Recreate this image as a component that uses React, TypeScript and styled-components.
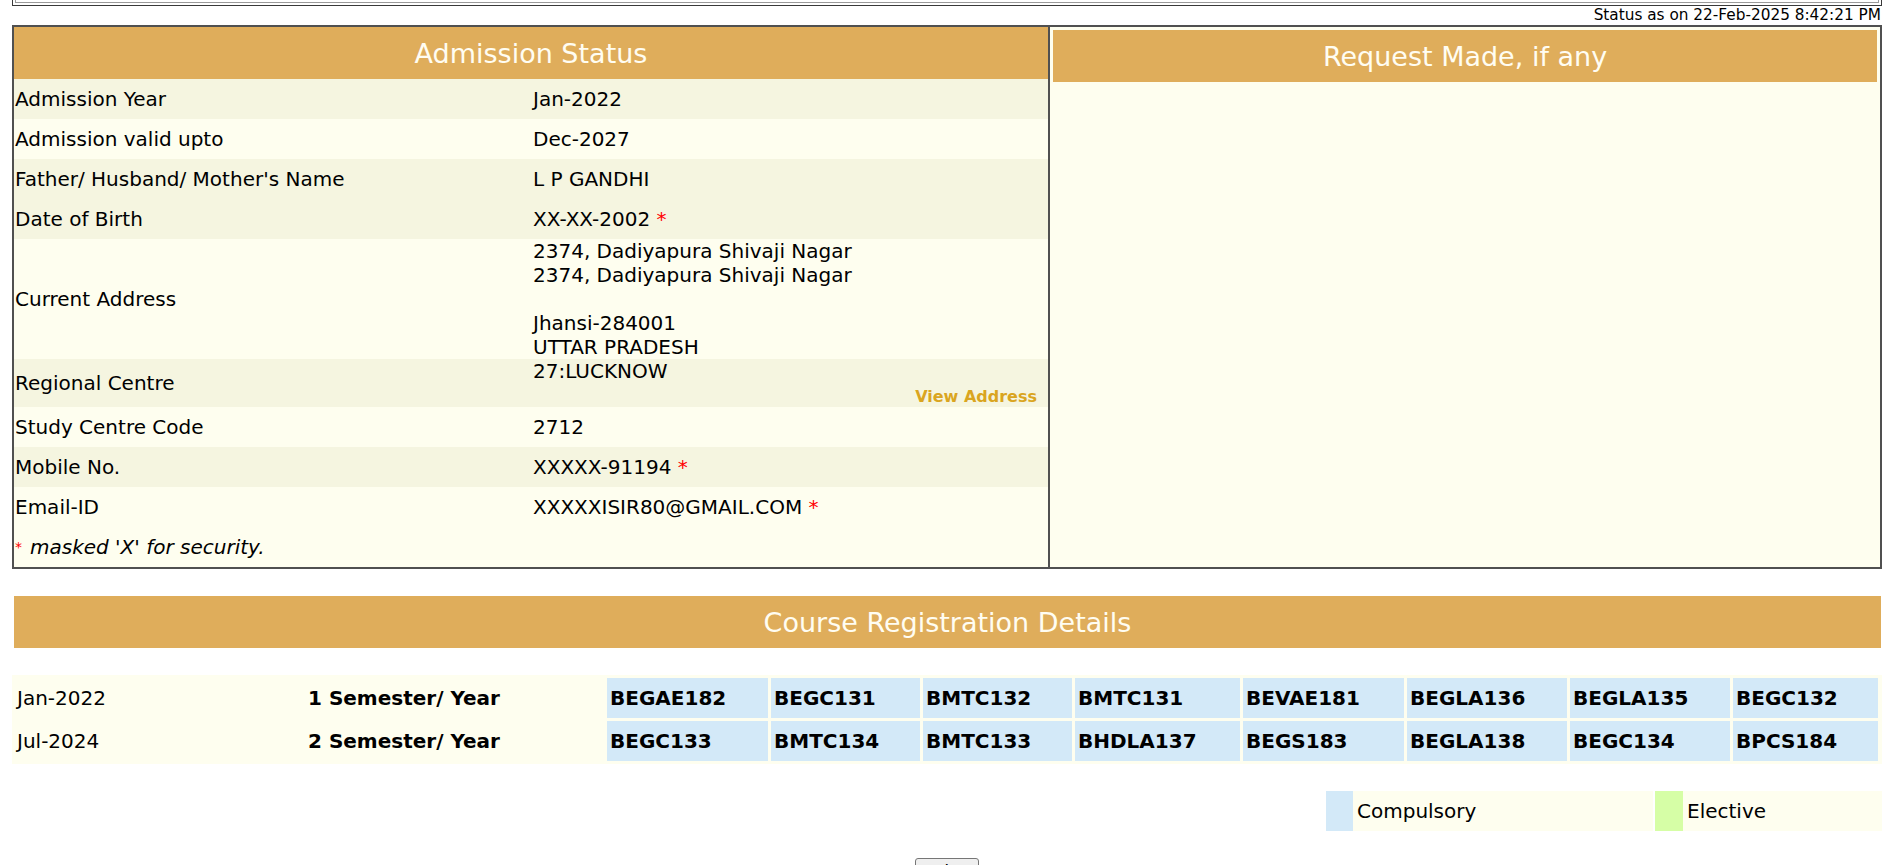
import React from "react";
import styled, { createGlobalStyle } from "styled-components";

const GlobalStyle = createGlobalStyle`
  html, body { margin: 0; padding: 0; background: #ffffff; }
  body { font-family: "DejaVu Sans", Verdana, sans-serif; color: #000; }
`;

const ORANGE = "#DFAD5B";
const BEIGE = "#F5F5E0";
const IVORY = "#FEFEEF";
const BLUE = "#D3E9F8";
const GREEN = "#D6FEA6";

const Page = styled.div`
  padding: 0 9px 0 12px;
`;

const TopFrame = styled.div`
  height: 6px;
  box-sizing: border-box;
  border: 1px solid #3a3a3a;
  border-top: none;
  padding: 0 2px 2px 2px;
`;

const TopFrameInner = styled.div`
  height: 3px;
  box-sizing: border-box;
  border: 1px solid #9a9a9a;
  border-top: none;
`;

const StatusLine = styled.div`
  height: 19px;
  line-height: 19px;
  font-size: 15.3px;
  text-align: right;
  padding-right: 1px;
  white-space: nowrap;
`;

const Panels = styled.div`
  display: grid;
  grid-template-columns: 1036px 1fr;
  border: 2px solid #505050;
`;

const LeftPanel = styled.div`
  border-right: 2px solid #505050;
  display: flex;
  flex-direction: column;
`;

const RightPanel = styled.div`
  background: ${IVORY};
  padding: 3px;
`;

const PanelHeader = styled.div`
  height: 52px;
  background: ${ORANGE};
  color: #fffdf2;
  font-size: 27px;
  display: flex;
  align-items: center;
  justify-content: center;
`;

const InfoRow = styled.div<{ $shade: "dark" | "light" }>`
  display: grid;
  grid-template-columns: 518px 1fr;
  min-height: 40px;
  background: ${(p) => (p.$shade === "dark" ? BEIGE : IVORY)};
  font-size: 20px;
  line-height: 24px;
`;

const Label = styled.div`
  display: flex;
  align-items: center;
  padding-left: 1px;
`;

const Value = styled.div<{ $top?: boolean }>`
  display: flex;
  flex-direction: column;
  justify-content: ${(p) => (p.$top ? "flex-start" : "center")};
  padding-left: 1px;
`;

const Star = styled.span`
  color: #ff0000;
`;

const ViewAddress = styled.div`
  align-self: flex-end;
  padding: 3px 11px 0 0;
  color: #DAA520;
  font-weight: bold;
  font-size: 16px;
  line-height: 21px;
`;

const Note = styled.div`
  display: flex;
  align-items: center;
  padding-left: 1px;
  font-size: 20px;
  font-style: italic;
  white-space: nowrap;
`;

const NoteStar = styled.span`
  color: #ff0000;
  font-size: 14px;
  font-style: normal;
  margin-right: 8px;
`;

const CourseHeader = styled(PanelHeader)`
  margin: 27px 1px 0 2px;
`;

const CourseGrid = styled.div`
  margin-top: 27px;
  background: ${IVORY};
  padding: 3px;
  display: grid;
  grid-template-columns: 288px 298px 161px 149px 149px 165px 161px 160px 160px 145px;
  grid-auto-rows: 40px;
  gap: 3px;
  font-size: 20px;
`;

const Cell = styled.div<{ $kind: "plain" | "bold" | "code" }>`
  display: flex;
  align-items: center;
  padding-left: ${(p) => (p.$kind === "code" ? "3px" : "2px")};
  font-weight: ${(p) => (p.$kind === "plain" ? "normal" : "bold")};
  background: ${(p) => (p.$kind === "code" ? BLUE : "transparent")};
  white-space: nowrap;
`;

const Legend = styled.div`
  margin-top: 27px;
  display: flex;
  justify-content: flex-end;
  height: 40px;
  font-size: 20px;
`;

const Swatch = styled.div<{ $color: string }>`
  width: ${(p) => (p.$color === BLUE ? 27 : 28)}px;
  background: ${(p) => p.$color};
`;

const LegendText = styled.div<{ $width: number; $gap?: boolean }>`
  width: ${(p) => p.$width}px;
  background: ${IVORY};
  display: flex;
  align-items: center;
  padding-left: 4px;
  box-sizing: border-box;
  margin-right: ${(p) => (p.$gap ? "2px" : "0")};
`;

const ButtonRow = styled.div`
  margin-top: 27px;
  display: flex;
  justify-content: center;
`;

const PrintButton = styled.button`
  font-family: "DejaVu Sans", Verdana, sans-serif;
  font-size: 18px;
  padding: 2px 10px;
  border: 1px solid #767676;
  border-radius: 3px;
  background: #efefef;
  color: #000;
`;

type Row = {
  label: string;
  value: string[];
  shade: "dark" | "light";
  star?: boolean;
};

const rows: Row[] = [
  { label: "Admission Year", value: ["Jan-2022"], shade: "dark" },
  { label: "Admission valid upto", value: ["Dec-2027"], shade: "light" },
  { label: "Father/ Husband/ Mother's Name", value: ["L P GANDHI"], shade: "dark" },
  { label: "Date of Birth", value: ["XX-XX-2002"], shade: "dark", star: true },
  {
    label: "Current Address",
    value: [
      "2374, Dadiyapura Shivaji Nagar",
      "2374, Dadiyapura Shivaji Nagar",
      "\u00a0",
      "Jhansi-284001",
      "UTTAR PRADESH",
    ],
    shade: "light",
  },
];

const rowsAfter: Row[] = [
  { label: "Study Centre Code", value: ["2712"], shade: "light" },
  { label: "Mobile No.", value: ["XXXXX-91194"], shade: "dark", star: true },
  { label: "Email-ID", value: ["XXXXXISIR80@GMAIL.COM"], shade: "light", star: true },
];

const courses = [
  {
    date: "Jan-2022",
    sem: "1 Semester/ Year",
    codes: ["BEGAE182", "BEGC131", "BMTC132", "BMTC131", "BEVAE181", "BEGLA136", "BEGLA135", "BEGC132"],
  },
  {
    date: "Jul-2024",
    sem: "2 Semester/ Year",
    codes: ["BEGC133", "BMTC134", "BMTC133", "BHDLA137", "BEGS183", "BEGLA138", "BEGC134", "BPCS184"],
  },
];

const renderRow = (r: Row) => (
  <InfoRow key={r.label} $shade={r.shade}>
    <Label>{r.label}</Label>
    <Value>
      {r.value.map((v, i) => (
        <div key={i}>
          {v}
          {r.star && i === r.value.length - 1 ? (
            <>
              {" "}
              <Star>*</Star>
            </>
          ) : null}
        </div>
      ))}
    </Value>
  </InfoRow>
);

export default function App() {
  return (
    <>
      <GlobalStyle />
      <Page>
        <TopFrame>
          <TopFrameInner />
        </TopFrame>
        <StatusLine>Status as on 22-Feb-2025 8:42:21 PM</StatusLine>
        <Panels>
          <LeftPanel>
            <PanelHeader>Admission Status</PanelHeader>
            {rows.map(renderRow)}
            <InfoRow $shade="dark">
              <Label>Regional Centre</Label>
              <Value $top>
                <div>27:LUCKNOW</div>
                <ViewAddress>View Address</ViewAddress>
              </Value>
            </InfoRow>
            {rowsAfter.map(renderRow)}
            <InfoRow $shade="light">
              <Note>
                <NoteStar>*</NoteStar>masked 'X' for security.
              </Note>
            </InfoRow>
          </LeftPanel>
          <RightPanel>
            <PanelHeader>Request Made, if any</PanelHeader>
          </RightPanel>
        </Panels>

        <CourseHeader>Course Registration Details</CourseHeader>
        <CourseGrid>
          {courses.map((c) => (
            <React.Fragment key={c.date}>
              <Cell $kind="plain">{c.date}</Cell>
              <Cell $kind="bold">{c.sem}</Cell>
              {c.codes.map((code) => (
                <Cell key={code} $kind="code">
                  {code}
                </Cell>
              ))}
            </React.Fragment>
          ))}
        </CourseGrid>

        <Legend>
          <Swatch $color={BLUE} />
          <LegendText $width={300} $gap>
            Compulsory
          </LegendText>
          <Swatch $color={GREEN} />
          <LegendText $width={199}>Elective</LegendText>
        </Legend>

        <ButtonRow>
          <PrintButton type="button">Print</PrintButton>
        </ButtonRow>
      </Page>
    </>
  );
}
